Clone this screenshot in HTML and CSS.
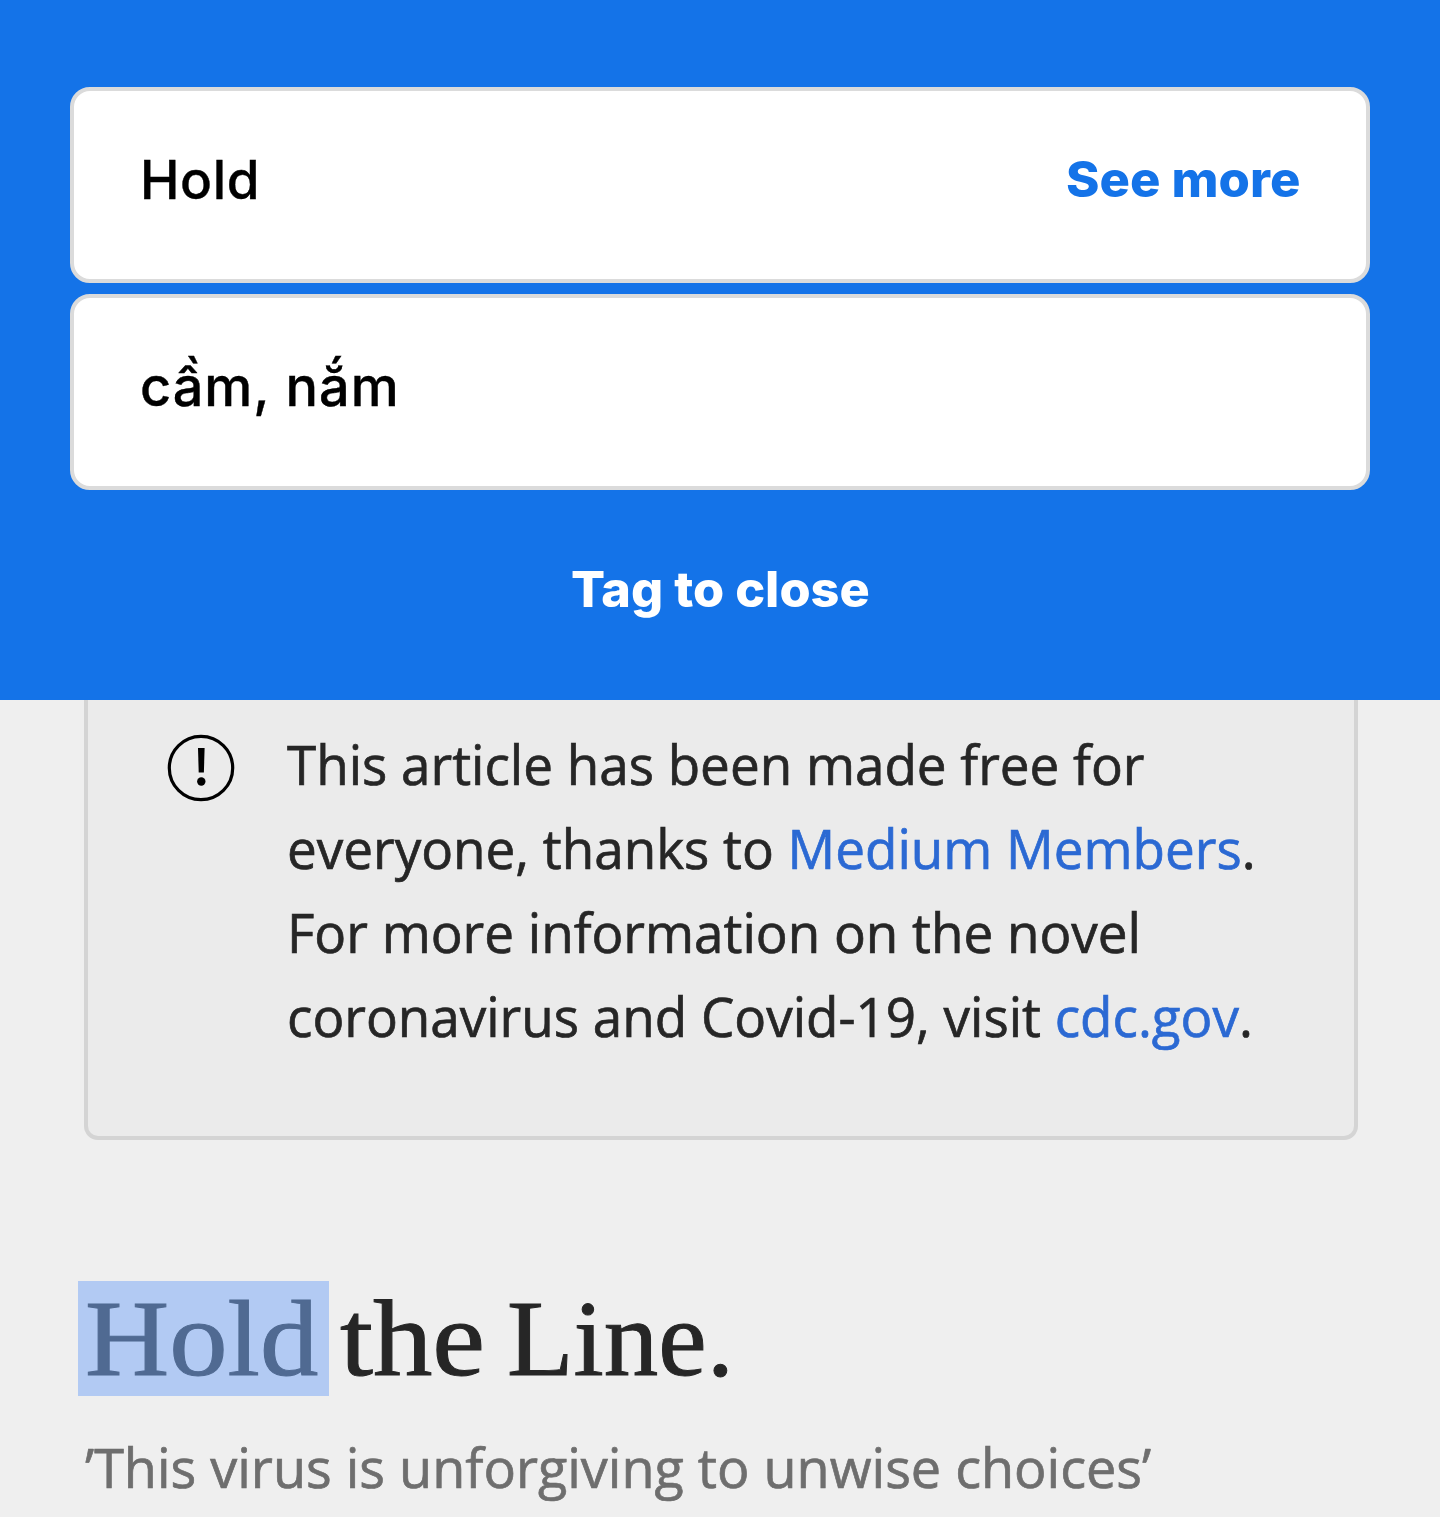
FILE: index.html
```html
<!DOCTYPE html>
<html lang="en">
<head>
<meta charset="utf-8">
<title>Hold the Line</title>
<link rel="stylesheet" href="styles.css">
</head>
<body>
<header class="panel">
  <div class="card">
    <span class="word">Hold</span>
    <a class="more">See more</a>
  </div>
  <div class="card">
    <span class="word meaning" lang="vi">cầm, nắm</span>
  </div>
  <button class="close">Tag to close</button>
</header>
<main class="article">
  <aside class="notice">
    <svg class="notice-icon" viewBox="0 0 68 68" aria-hidden="true">
      <circle cx="34" cy="34" r="31.7" fill="none" stroke="#000" stroke-width="3.2"/>
      <path d="M31 14h6.600l-.7 24.500h-5.200z"/>
      <circle cx="34.300" cy="47.500" r="4.200"/>
    </svg>
    <p class="notice-text">
      <span class="line">This article has been made free for</span>
      <span class="line">everyone, thanks to <a class="link">Medium Members</a>.</span>
      <span class="line">For more information on the novel</span>
      <span class="line">coronavirus and Covid-19, visit <a class="link">cdc.gov</a>.</span>
    </p>
  </aside>
  <h1 class="title"><span class="selected"><span class="selected-text">Hold</span></span><span class="title-the">the</span><span class="title-line">Line.</span></h1>
  <p class="subtitle">’This virus is unforgiving to unwise choices’</p>
</main>
</body>
</html>
```

FILE: styles.css
```css
* { box-sizing: border-box; }
body {
  margin: 0;
  height: 1517px;
  overflow: hidden;
  background: #efefef;
  color: #262626;
  font-family: "Open Sans", sans-serif;
}
.panel {
  height: 700px;
  padding: 87px 70px 0;
  display: flex;
  flex-direction: column;
  gap: 11px;
  background: #1473e8;
  font-family: Inter, sans-serif;
}
.card {
  height: 196px;
  padding: 58px 66px 0 65px;
  display: flex;
  justify-content: space-between;
  align-items: flex-start;
  border: 4px solid #dbdbdb;
  border-radius: 20px;
  background: #fff;
  color: #000;
}
.word {
  padding-left: 1px;
  font-size: 53px;
  font-weight: 500;
  line-height: 62px;
  letter-spacing: .6px;
  -webkit-text-stroke: .4px;
}
.meaning { font-size: 54px; letter-spacing: 1px; line-height: 61px; }
.more {
  color: #1473e8;
  font-size: 49px;
  font-weight: 800;
  line-height: 62px;
  transform: scaleX(1.035);
  transform-origin: right;
}
.close {
  align-self: center;
  margin-top: 58px;
  padding: 0;
  border: 0;
  background: none;
  color: #fff;
  font: 800 49px/62px Inter, sans-serif;
  transform: scaleX(1.028);
}
.article { padding: 0 82px 0 84px; }
.notice {
  height: 440px;
  padding: 22px 0 0 79px;
  display: flex;
  border: 4px solid #d4d4d4;
  border-top: 0;
  border-radius: 0 0 14px 14px;
  background: #ebebeb;
}
.notice-icon {
  flex: none;
  width: 68px;
  height: 68px;
  margin: 12px 52px 0 0;
}
.notice-text {
  margin: 0;
  font-size: 55px;
  line-height: 84px;
  white-space: nowrap;
  transform: scaleX(.9635);
  transform-origin: left;
  -webkit-text-stroke: .7px;
}
.line { display: block; }
.link { color: #2b69d3; }
.title {
  margin: 141px 0 0 -6px;
  height: 115px;
  display: flex;
  font: 400 109px/115px "Liberation Serif", serif;
  -webkit-text-stroke: 1px;
}
.selected {
  width: 251px;
  padding-left: 7px;
  background: #b2caf3;
  color: #506a92;
}
.selected-text, .title-the {
  display: inline-block;
  transform: scaleX(1.07);
  transform-origin: left;
}
.title-the {
  width: 178px;
  padding-left: 10px;
  transform: scaleX(1.09);
}
.subtitle {
  margin: 29px 0 0 1px;
  color: #6e6e6e;
  font-size: 55px;
  line-height: 84px;
  white-space: nowrap;
  transform: scaleX(.981);
  transform-origin: left;
  -webkit-text-stroke: .7px;
}
```
